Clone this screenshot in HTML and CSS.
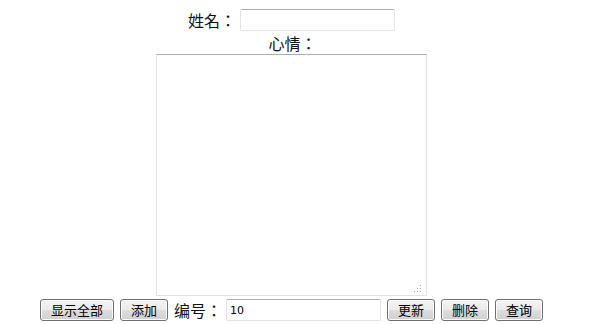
FILE: index.html
```html
<!DOCTYPE html>
<html lang="zh-CN">
<head>
<meta charset="utf-8">
<title>心情</title>
<link rel="stylesheet" href="styles.css">
</head>
<body>
<div class="page">
  <div class="row name-row">
    <label class="label" for="name">姓名：</label>
    <input id="name" class="field" type="text">
  </div>
  <div class="row mood-label">
    <label class="label" for="mood">心情：</label>
  </div>
  <div class="row">
    <div class="area-wrap">
      <textarea id="mood" class="area"></textarea>
      <span class="grip"></span>
    </div>
  </div>
  <div class="row actions">
    <button class="btn wide">显示全部</button>
    <button class="btn">添加</button>
    <label class="label num-label" for="num">编号：</label>
    <input id="num" class="field num" type="text" value="10">
    <button class="btn">更新</button>
    <button class="btn">删除</button>
    <button class="btn last">查询</button>
  </div>
</div>
</body>
</html>
```

FILE: styles.css
```css
html, body {
  margin: 0;
  padding: 0;
  background: #ffffff;
}

.page {
  width: 583px;
  display: flex;
  flex-direction: column;
  align-items: center;
  font-family: "Noto Sans CJK SC", "Noto Sans", sans-serif;
  color: #000;
}

.row {
  display: flex;
  align-items: center;
}

.name-row {
  margin-top: 9px;
  height: 22px;
}

.label {
  font-family: "Noto Sans CJK TC", "Noto Sans CJK SC", sans-serif;
  font-feature-settings: "locl" 0;
  font-size: 16px;
  line-height: 22px;
  color: #111;
}

.name-row .label {
  margin-right: 4px;
}

.field {
  box-sizing: border-box;
  width: 155px;
  height: 22px;
  margin: 0;
  padding: 0 3px;
  border: 1px solid #e2e3ea;
  border-top-color: #abadb3;
  border-radius: 2px;
  background: #fff;
  font-family: "DejaVu Sans", "Liberation Sans", sans-serif;
  font-size: 11px;
  color: #000;
  outline: none;
}

.mood-label {
  height: 23px;
}

.mood-label .label {
  margin-left: 2px;
}

.area-wrap {
  position: relative;
  width: 271px;
  height: 242px;
}

.area {
  box-sizing: border-box;
  display: block;
  width: 271px;
  height: 242px;
  margin: 0;
  padding: 2px;
  border: 1px solid #dfe3e8;
  border-top-color: #abadb3;
  resize: none;
  outline: none;
  background: #fff;
}

.grip {
  position: absolute;
  right: 6px;
  bottom: 4px;
  width: 1px;
  height: 1px;
  background: #a0a0a0;
  box-shadow:
    0 -3px 0 #a0a0a0,
    0 -6px 0 #a0a0a0,
    -3px 0 0 #a0a0a0,
    -3px -3px 0 #a0a0a0,
    -6px 0 0 #a0a0a0;
}

.actions {
  margin-top: 3px;
  height: 22px;
}

.btn {
  box-sizing: border-box;
  height: 22px;
  width: 48px;
  margin: 0 6px 0 0;
  padding: 0;
  border: 1px solid #707070;
  border-radius: 3px;
  background: linear-gradient(#f4f4f4 0%, #ebebeb 48%, #dddddd 52%, #cfcfcf 100%);
  box-shadow: inset 0 0 0 1px #fcfcfc;
  font-family: "Noto Sans CJK SC", sans-serif;
  font-size: 13px;
  line-height: 20px;
  color: #000;
}

.btn.wide {
  width: 74px;
}

.btn.last {
  margin-right: 0;
}

.num-label {
  margin: 0 4px 0 0;
}

.num {
  margin-right: 6px;
}
```
